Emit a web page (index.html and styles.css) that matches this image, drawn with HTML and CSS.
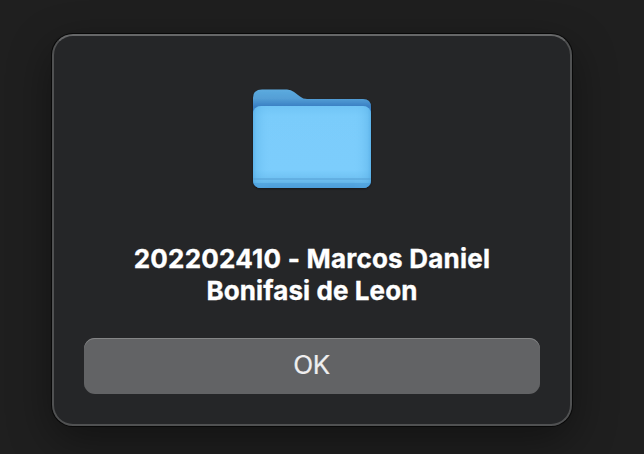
FILE: index.html
```html
<!DOCTYPE html>
<html lang="en">
<head>
<meta charset="utf-8">
<title>Alert</title>
<link rel="stylesheet" href="styles.css">
</head>
<body>
<main class="dialog" role="alertdialog" aria-labelledby="title">
  <svg class="folder" width="130" height="112" viewBox="0 0 130 112" aria-hidden="true">
    <defs>
      <linearGradient id="back" x1="0" y1="0" x2="0" y2="1">
        <stop offset="0" stop-color="#5cabdf"/>
        <stop offset=".09" stop-color="#549fd6"/>
        <stop offset=".17" stop-color="#3a80c4"/>
        <stop offset="1" stop-color="#3a80c4"/>
      </linearGradient>
      <linearGradient id="edges" x1="0" y1="0" x2="1" y2="0">
        <stop offset="0" stop-color="#4ca4df" stop-opacity=".65"/>
        <stop offset=".03" stop-color="#5bb2e8" stop-opacity=".42"/>
        <stop offset=".15" stop-color="#7accfb" stop-opacity="0"/>
        <stop offset=".85" stop-color="#7accfb" stop-opacity="0"/>
        <stop offset=".97" stop-color="#5bb2e8" stop-opacity=".42"/>
        <stop offset="1" stop-color="#4ca4df" stop-opacity=".65"/>
      </linearGradient>
      <linearGradient id="front" x1="0" y1="0" x2="0" y2="1">
        <stop offset="0" stop-color="#70c4f5"/>
        <stop offset=".12" stop-color="#7accfb"/>
        <stop offset=".78" stop-color="#7ccdfc"/>
        <stop offset=".88" stop-color="#70c2f3"/>
        <stop offset=".93" stop-color="#65b7ea"/>
        <stop offset="1" stop-color="#50a2dc"/>
      </linearGradient>
      <filter id="shadow" x="-10%" y="-10%" width="120%" height="120%">
        <feDropShadow dx="0" dy="1" stdDeviation="1.2" flood-color="#000" flood-opacity=".45"/>
      </filter>
      <clipPath id="panel"><rect x="6" y="21" width="118" height="82" rx="8"/></clipPath>
    </defs>
    <g filter="url(#shadow)">
      <path fill="url(#back)" d="M6 13Q6 4.500 15 4.500H40Q44 4.500 47 7L53 11.500Q56 14 60 14H116Q124 14 124 22V95Q124 103 116 103H14Q6 103 6 95Z"/>
      <rect x="6" y="21" width="118" height="82" rx="8" fill="url(#front)"/>
    </g>
    <g clip-path="url(#panel)">
      <rect x="6" y="21" width="118" height="82" fill="url(#edges)"/>
      <rect x="6" y="93" width="118" height="2" fill="#559fd3" opacity=".5"/>
      <rect x="6" y="98" width="118" height="5" fill="#479ad7" opacity=".5"/>
    </g>
  </svg>
  <h1 class="title" id="title"><span class="line-first">202202410 - Marcos Daniel</span><span class="line-second">Bonifasi de Leon</span></h1>
  <button class="ok" type="button">OK</button>
</main>
</body>
</html>
```
FILE: styles.css
```css
* {
  box-sizing: border-box;
}

body {
  margin: 0;
  height: 454px;
  padding: 34px 72px 28px 52px;
  overflow: hidden;
  background: #1f1f1f;
  font-family: Inter, "Liberation Sans", sans-serif;
}

.dialog {
  display: flex;
  flex-direction: column;
  align-items: center;
  width: 520px;
  height: 392px;
  padding: 49px 30px 30px;
  border: 2px solid #505152;
  border-top-color: #666768;
  border-radius: 21px;
  background: #252628;
  box-shadow: 0 0 0 1px #080808, 0 14px 44px rgba(0, 0, 0, 0.42);
}

.folder {
  display: block;
  flex: none;
}

.title {
  display: flex;
  flex-direction: column;
  align-items: center;
  margin: 46px 0 0;
  color: #fff;
  font-size: 26px;
  font-weight: 700;
  line-height: 32px;
  white-space: nowrap;
  font-feature-settings: "calt" 0;
  -webkit-text-stroke: 0.35px #fff;
}

.line-first {
  letter-spacing: 0.23px;
}

.line-second {
  letter-spacing: 0.1px;
}

.ok {
  width: 456px;
  height: 56px;
  margin: auto 0 0;
  padding: 0 1px 2px 0;
  border: 0;
  border-radius: 11px;
  background: #626365;
  box-shadow: inset 0 1px 0 #848586;
  color: #eeeeef;
  font: 400 26px/54px Inter, "Liberation Sans", sans-serif;
  letter-spacing: -0.5px;
  -webkit-text-stroke: 0.2px #eeeeef;
}
```
